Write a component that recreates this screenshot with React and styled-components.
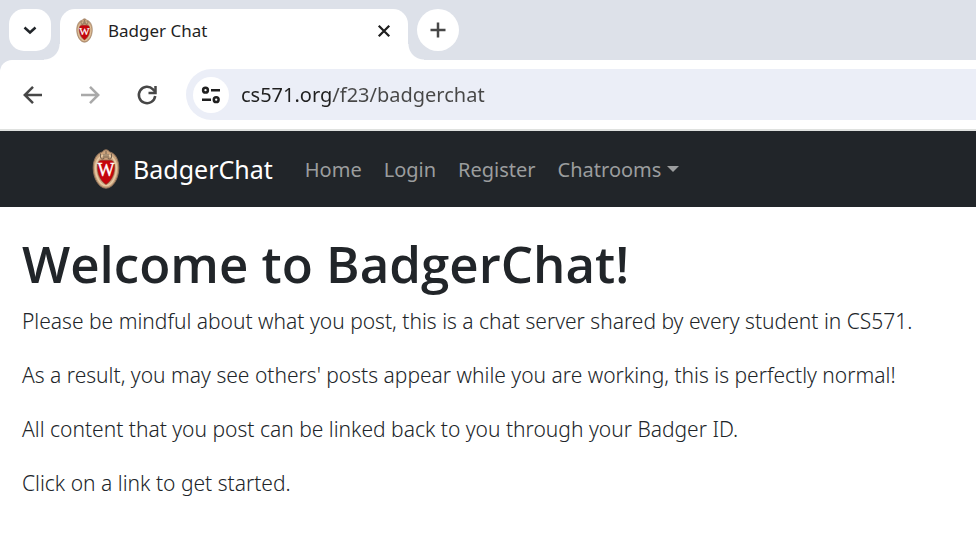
import React from "react";
import styled, { createGlobalStyle } from "styled-components";

const GlobalStyle = createGlobalStyle`
  *, *::before, *::after { box-sizing: border-box; }
  body {
    margin: 0;
    background: #fff;
    color: #212529;
    font-family: "Segoe UI", "Noto Sans", "Open Sans", sans-serif;
    font-size: 20px;
    line-height: 33px;
  }
  button, input { font: inherit; color: inherit; border: 0; padding: 0; }
`;

const TabStrip = styled.header`
  display: flex;
  align-items: flex-start;
  gap: 9px;
  height: 60px;
  padding: 9px 9px 0;
  background: #dde1e9;
`;

const StripButton = styled.button`
  display: grid;
  place-items: center;
  flex: none;
  width: 42px;
  height: 42px;
  border-radius: ${(p) => (p.$round ? "50%" : "15px")};
  background: #fff;
`;

const Tab = styled.div`
  position: relative;
  display: flex;
  align-items: center;
  flex: 0 1 348px;
  height: 51px;
  padding: 0 15px 8px 16px;
  border-radius: 15px 15px 0 0;
  background: #fff;
  font-size: 17px;
  line-height: 24px;
  color: #1f1f1f;

  &::before,
  &::after {
    content: "";
    position: absolute;
    bottom: 0;
    width: 16px;
    height: 16px;
  }
  &::before {
    right: 100%;
    background: radial-gradient(circle at 0 0, transparent 15px, #fff 16px);
  }
  &::after {
    left: 100%;
    background: radial-gradient(circle at 100% 0, transparent 15px, #fff 16px);
  }
`;

const TabTitle = styled.span`
  flex: 1;
  margin-left: 15px;
  white-space: nowrap;
`;

const IconButton = styled.button`
  display: grid;
  place-items: center;
  flex: none;
  width: ${(p) => p.$size || 24}px;
  height: ${(p) => p.$size || 24}px;
  border-radius: 50%;
  background: ${(p) => p.$fill || "transparent"};
  color: ${(p) => p.$tone || "#474747"};
`;

const ToolbarFrame = styled.div`
  background: #dde1e9;
`;

const Toolbar = styled.div`
  display: flex;
  align-items: center;
  height: 71px;
  padding: 0 0 0 15px;
  border-bottom: 2px solid #dfe1df;
  border-radius: 12px 0 0 0;
  background: #fff;
`;

const NavGroup = styled.div`
  display: flex;
  gap: 21px;
  margin-right: 21px;
`;

const AddressBar = styled.label`
  display: flex;
  align-items: center;
  gap: 12px;
  flex: 1;
  min-width: 0;
  height: 51px;
  padding-left: 7px;
  border-radius: 26px 0 0 26px;
  background: #ebeef7;
`;

const AddressInput = styled.input`
  flex: 1;
  min-width: 0;
  height: 33px;
  outline: 0;
  color: transparent;
  caret-color: #1f1f1f;
  background: linear-gradient(90deg, #1f1f1f 90px, #474747 90px);
  background-clip: text;
`;

const SiteNav = styled.nav`
  display: flex;
  align-items: center;
  min-height: 76px;
  padding: 0 92px;
  background: #212529;
`;

const Brand = styled.a`
  display: flex;
  align-items: center;
  gap: 13px;
  margin-right: 32px;
  color: #fff;
  font-size: 25px;
  line-height: 40px;
  text-decoration: none;
`;

const NavLinks = styled.div`
  display: flex;
  align-items: center;
  gap: 22px;
`;

const NavLink = styled.a`
  color: #9b9d9e;
  text-decoration: none;
`;

const NavToggle = styled.button`
  display: flex;
  align-items: center;
  gap: 6px;
  background: transparent;
  color: #9b9d9e;
`;

const Caret = styled.span`
  border: 6px solid transparent;
  border-top-color: currentColor;
  border-bottom: 0;
`;

const Page = styled.main`
  padding: 24px 22px;
`;

const Heading = styled.h1`
  margin: 0 0 10px;
  font-family: "Segoe UI", "Open Sans", sans-serif;
  font-size: 51px;
  font-weight: 600;
  line-height: 64px;
`;

const Paragraph = styled.p`
  margin: 0 0 21px;
  font-size: 21px;
  font-weight: 300;
`;

function Crest({ width, height }) {
  return (
    <svg width={width} height={height} viewBox="0 0 28 40" aria-hidden="true">
      <path
        d="M14 .8c2 0 2.900 1.200 3.600 2.200C23 4 26.800 10 26.800 19c0 10-5.500 20.200-12.800 20.200S1.200 29 1.200 19C1.200 10 5 4 10.400 3 11.100 2 12 .8 14 .8z"
        fill="#c9a27c"
        stroke="#8c7058"
        strokeWidth="1"
      />
      <path
        d="M14 6C7.500 6 3.500 12 3.500 19.500S8 36.500 14 36.500s10.500-9.500 10.500-17S20.500 6 14 6z"
        fill="none"
        stroke="#e6caa4"
        strokeWidth="1.500"
      />
      <path
        d="M8.500 4.500v3.500c0 2 2 2.500 3.500 1.500V5M19.500 4.500v3.500c0 2-2 2.500-3.500 1.500V5M14 2v7"
        fill="none"
        stroke="#73604f"
        strokeWidth="1"
      />
      <path
        d="M5.500 16c.2-3 2-4.800 4.500-4.800h8c2.500 0 4.300 1.800 4.500 4.800.5 8-2 15-8.500 19.500C7.500 31 5 24 5.500 16z"
        fill="#c5050c"
        stroke="#7d3a2c"
        strokeWidth=".6"
      />
      <text
        x="14"
        y="27"
        textAnchor="middle"
        fontFamily="Liberation Serif, serif"
        fontSize="18"
        fill="#fff"
        stroke="#fff"
        strokeWidth=".4"
      >
        W
      </text>
    </svg>
  );
}

function Icon({ size = 24, stroke = 2.500, children }) {
  return (
    <svg
      width={size}
      height={size}
      viewBox="0 0 24 24"
      fill="none"
      stroke="currentColor"
      strokeWidth={stroke}
      aria-hidden="true"
    >
      {children}
    </svg>
  );
}

const paragraphs = [
  "Please be mindful about what you post, this is a chat server shared by every student in CS571.",
  "As a result, you may see others' posts appear while you are working, this is perfectly normal!",
  "All content that you post can be linked back to you through your Badger ID.",
  "Click on a link to get started.",
];

export default function App() {
  return (
    <>
      <GlobalStyle />
      <TabStrip>
        <StripButton aria-label="Search tabs">
          <Icon><path d="M6.500 9.500l5.500 5 5.500-5" /></Icon>
        </StripButton>
        <Tab>
          <Crest width={17} height={25} />
          <TabTitle>Badger Chat</TabTitle>
          <IconButton $size={18} $tone="#1f1f1f" aria-label="Close tab">
            <Icon size={18} stroke={3}><path d="M5 5l14 14M19 5L5 19" /></Icon>
          </IconButton>
        </Tab>
        <StripButton $round aria-label="New tab">
          <Icon><path d="M12 4.500v15M4.500 12h15" stroke="#474747" /></Icon>
        </StripButton>
      </TabStrip>

      <ToolbarFrame>
        <Toolbar>
          <NavGroup>
            <IconButton $size={36} aria-label="Back">
              <Icon><path d="M21 12H4M12 3.800L3.800 12l8.200 8.200" /></Icon>
            </IconButton>
            <IconButton $size={36} $tone="#a9a9a9" aria-label="Forward">
              <Icon><path d="M3 12h17M12 3.800l8.200 8.200-8.200 8.200" /></Icon>
            </IconButton>
            <IconButton $size={36} aria-label="Reload">
              <Icon>
                <path d="M20.200 13A8.200 8.200 0 1 1 18 6.300L20.400 9" />
                <path d="M20.500 3v7H13.500" />
              </Icon>
            </IconButton>
          </NavGroup>
          <AddressBar>
            <IconButton $size={36} $fill="#fff" $tone="#1f1f1f" aria-label="Site information">
              <Icon>
                <circle cx="6.500" cy="7.200" r="2.400" />
                <path d="M12 7.200h9M3 16.700h9" />
                <circle cx="17.200" cy="16.700" r="2.400" />
              </Icon>
            </IconButton>
            <AddressInput aria-label="Address" defaultValue="cs571.org/f23/badgerchat" />
          </AddressBar>
        </Toolbar>
      </ToolbarFrame>

      <SiteNav>
        <Brand href="#">
          <Crest width={28} height={40} />
          BadgerChat
        </Brand>
        <NavLinks>
          <NavLink href="#home">Home</NavLink>
          <NavLink href="#login">Login</NavLink>
          <NavLink href="#register">Register</NavLink>
          <NavToggle aria-haspopup="menu">
            Chatrooms
            <Caret />
          </NavToggle>
        </NavLinks>
      </SiteNav>

      <Page>
        <Heading>Welcome to BadgerChat!</Heading>
        {paragraphs.map((text) => (
          <Paragraph key={text}>{text}</Paragraph>
        ))}
      </Page>
    </>
  );
}
